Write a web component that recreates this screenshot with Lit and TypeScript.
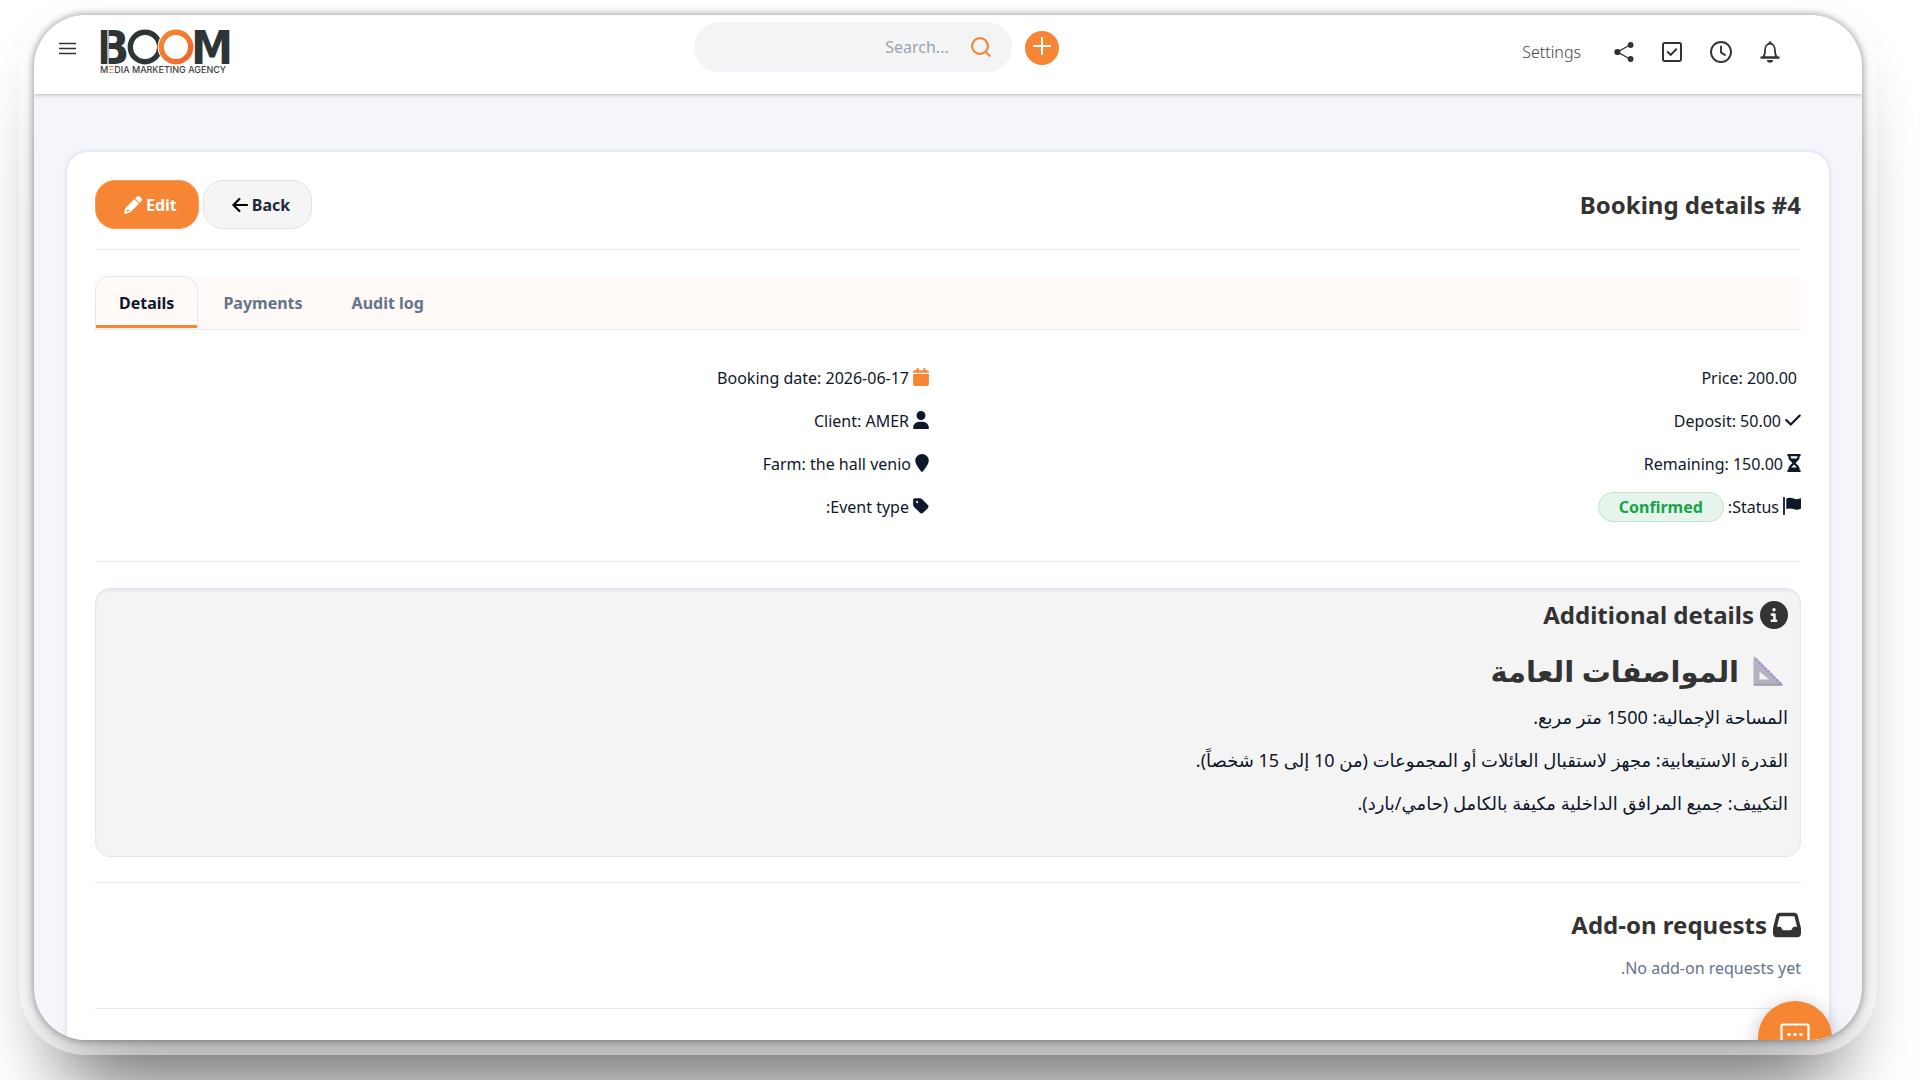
import { LitElement, html, css, svg, nothing } from "lit";
import { customElement, property, state } from "lit/decorators.js";

type Glyph = { box: string; body: unknown };

const solid = (box: string, d: string): Glyph => ({ box, body: svg`<path fill="currentColor" d=${d}></path>` });

const GLYPHS: Record<string, Glyph> = {
  menu: {
    box: "0 0 18 14",
    body: svg`<path d="M0 1.5h17M0 6.5h17M0 11.5h17" stroke="currentColor" stroke-width="1.4"></path>`,
  },
  search: {
    box: "0 0 20 20",
    body: svg`<g fill="none" stroke="currentColor" stroke-width="2.2"><circle cx="9" cy="9" r="7.900"></circle><path d="M14.6 14.6L19.2 19.4"></path></g>`,
  },
  plus: {
    box: "0 0 18 18",
    body: svg`<path d="M9 0v18M0 9h18" stroke="currentColor" stroke-width="2"></path>`,
  },
  share: {
    box: "0 0 20 20",
    body: svg`<g fill="currentColor"><circle cx="3.4" cy="10" r="3.1"></circle><circle cx="16.6" cy="3" r="2.9"></circle><circle cx="16.6" cy="17" r="2.9"></circle></g><path d="M16 3L3.4 10L16 17" fill="none" stroke="currentColor" stroke-width="1.4"></path>`,
  },
  task: {
    box: "0 0 20 20",
    body: svg`<g fill="none" stroke="currentColor"><rect x="1" y="1" width="18" height="18" rx="1.4" stroke-width="2"></rect><path d="M5.2 9.6l3.5 3.3 6-6.2" stroke-width="2"></path></g>`,
  },
  clock: {
    box: "0 0 22 22",
    body: svg`<g fill="none" stroke="currentColor" stroke-width="1.9"><circle cx="11" cy="11" r="10"></circle><path d="M11 4.8v6.6l4.6 3.1"></path></g>`,
  },
  bell: {
    box: "0 0 20 22",
    body: svg`<path d="M3 16.5c1.8-1.8 2-4 2-7C5 5.400 7.200 2.600 10 2.600s5 2.800 5 6.900c0 3 .2 5.200 2 7z" fill="none" stroke="currentColor" stroke-width="1.800"></path><path d="M0.400 16.500h19.200" stroke="currentColor" stroke-width="1.800"></path><circle cx="10" cy="1.700" r="1.500" fill="currentColor"></circle><path d="M7 19h6a3 2.800 0 0 1-6 0z" fill="currentColor"></path>`,
  },
  pencil: solid(
    "0 0 512 512",
    "M410.3 231l11.3-11.3-33.900-33.900-62.100-62.100L291.700 89.800l-11.300 11.300-22.600 22.600L58.600 322.900c-10.400 10.400-18 23.300-22.200 37.400L1 480.700c-2.500 8.400-.2 17.500 6.100 23.700s15.300 8.500 23.700 6.100l120.300-35.400c14.100-4.200 27-11.800 37.400-22.200L387.700 253.700 410.300 231zM160 399.400l-9.100 22.700c-4 3.100-8.500 5.400-13.300 6.900L79.400 446l15-58.100c1.400-4.900 3.800-9.400 6.900-13.300l10.700-9.100v18c0 8.800 7.200 16 16 16h32zM362.700 18.700L348.300 33.200 325.700 55.800 314.300 67.100l33.900 33.900 62.100 62.100 33.900 33.900 11.300-11.300 22.600-22.600 14.500-14.500c25-25 25-65.500 0-90.500L453.300 18.700c-25-25-65.500-25-90.500 0z",
  ),
  back: {
    box: "0 0 16 16",
    body: svg`<path d="M7.400 2L1.400 8l6 6M1.600 8H15" fill="none" stroke="#000" stroke-width="2.200" stroke-linecap="round" stroke-linejoin="round"></path>`,
  },
  calendar: solid(
    "0 0 448 512",
    "M96 32V64H48C21.500 64 0 85.500 0 112v24H448V112c0-26.500-21.500-48-48-48H352V32c0-17.700-14.300-32-32-32s-32 14.300-32 32V64H160V32c0-17.700-14.300-32-32-32S96 14.300 96 32zM448 172H0V464c0 26.500 21.500 48 48 48H400c26.500 0 48-21.500 48-48V172z",
  ),
  user: solid(
    "0 0 448 512",
    "M224 256A128 128 0 1 0 224 0a128 128 0 1 0 0 256zm-45.700 48C79.800 304 0 383.800 0 482.300C0 498.700 13.300 512 29.700 512H418.300c16.400 0 29.700-13.300 29.700-29.700C448 383.800 368.200 304 269.700 304H178.300z",
  ),
  pin: solid(
    "0 0 384 512",
    "M384 192c0 87.400-117 243-168.300 307.200c-12.300 15.300-35.100 15.300-47.400 0C117 435 0 279.400 0 192C0 86 86 0 192 0S384 86 384 192z",
  ),
  tag: solid(
    "0 0 448 512",
    "M0 80V229.500c0 17 6.700 33.300 18.700 45.300l176 176c25 25 65.500 25 90.500 0L418.700 317.300c25-25 25-65.500 0-90.500l-176-176c-12-12-28.300-18.700-45.300-18.700H48C21.500 32 0 53.500 0 80zm112 32a32 32 0 1 1 0 64 32 32 0 1 1 0-64z",
  ),
  check: solid(
    "0 0 448 512",
    "M438.600 105.400c12.500 12.500 12.500 32.800 0 45.300l-256 256c-12.500 12.500-32.800 12.500-45.300 0l-128-128c-12.500-12.500-12.500-32.800 0-45.300s32.800-12.500 45.300 0L160 338.700 393.400 105.400c12.500-12.500 32.800-12.500 45.300 0z",
  ),
  hourglass: solid(
    "0 0 384 512",
    "M32 0C14.300 0 0 14.300 0 32S14.300 64 32 64V75c0 42.400 16.900 83.100 46.900 113.100L146.700 256 78.900 323.900C48.900 353.900 32 394.600 32 437v11c-17.700 0-32 14.300-32 32s14.300 32 32 32H352c17.700 0 32-14.300 32-32s-14.300-32-32-32V437c0-42.400-16.900-83.100-46.900-113.100L237.300 256l67.900-67.900c30-30 46.900-70.700 46.900-113.100V64c17.700 0 32-14.300 32-32s-14.300-32-32-32H32zM96 75V64H288V75c0 19-5.600 37.400-16 53H112c-10.300-15.600-16-34-16-53zm16 309c3.500-5.300 7.600-10.300 12.100-14.900L192 301.300l67.900 67.900c4.600 4.600 8.600 9.600 12.100 14.900H112z",
  ),
  flag: {
    box: "0 0 18 18",
    body: svg`<path d="M1 .8v16.400" stroke="currentColor" stroke-width="1.800" stroke-linecap="round"></path><path d="M3.300 1.400c2.600-1 5-.9 7.200.1 2.200 1 4.500.9 6.600-.2.5-.2.900 0 .9.500v9.800c-2.600 1.500-5.200 1.500-7.600.5-2.300-.9-4.600-.9-7.100-.1z" fill="currentColor"></path>`,
  },
  info: solid(
    "0 0 512 512",
    "M256 512A256 256 0 1 0 256 0a256 256 0 1 0 0 512zM216 336h24V272H216c-13.300 0-24-10.700-24-24s10.700-24 24-24h48c13.300 0 24 10.700 24 24v88h8c13.300 0 24 10.700 24 24s-10.700 24-24 24H216c-13.300 0-24-10.700-24-24s10.700-24 24-24zm40-208a32 32 0 1 1 0 64 32 32 0 1 1 0-64z",
  ),
  inbox: solid(
    "0 0 512 512",
    "M121 32C91.600 32 66 52 58.900 80.500L1.900 308.400C.6 313.500 0 318.700 0 323.900V416c0 35.300 28.700 64 64 64H448c35.300 0 64-28.700 64-64V323.900c0-5.200-.6-10.400-1.900-15.500l-57-227.900C446 52 420.400 32 391 32H121zm0 64H391l48 192H387.800c-12.100 0-23.200 6.800-28.600 17.700l-14.300 28.600c-5.400 10.800-16.500 17.700-28.600 17.700H195.800c-12.100 0-23.200-6.800-28.600-17.700l-14.300-28.600c-5.400-10.800-16.500-17.700-28.600-17.700H73L121 96z",
  ),
  ruler: {
    box: "0 0 30 30",
    body: svg`<path d="M0.500 2c0-1.500 1-2 2-1L29 27.500c1.200 1.300.6 2.500-1 2.500H2.500c-1.200 0-2-.8-2-2zM6.500 15.500v8h9.500z" fill="#b7b2c2" fill-rule="evenodd"></path><path d="M0.500 28.500h29" stroke="#a19bae" stroke-width="1.500"></path><path d="M3 3.400L27.500 27.400" stroke="#a277ee" stroke-width="2" stroke-dasharray="1.600 2.500"></path>`,
  },
  chat: {
    box: "0 0 30 30",
    body: svg`<path d="M3 1.500h24a1.500 1.500 0 0 1 1.500 1.500v19a1.500 1.500 0 0 1-1.500 1.500H9l-7.500 5V3A1.500 1.500 0 0 1 3 1.500z" fill="none" stroke="currentColor" stroke-width="2.200"></path><path d="M7.500 10h3v3h-3zM13.500 10h3v3h-3zM19.500 10h3v3h-3z" fill="currentColor"></path>`,
  },
};

@customElement("ui-icon")
export class UiIcon extends LitElement {
  @property() name = "";

  static styles = css`
    :host { display: inline-flex; flex: none; }
    svg { display: block; width: 100%; height: 100%; }
  `;

  render() {
    const g = GLYPHS[this.name];
    return g ? html`<svg viewBox=${g.box} aria-hidden="true">${g.body}</svg>` : nothing;
  }
}

@customElement("brand-logo")
export class BrandLogo extends LitElement {
  static styles = css`
    :host { display: block; width: 128px; height: 44px; }
    svg { display: block; overflow: visible; }
    .letter { font: 700 47px "Liberation Sans Narrow", "DejaVu Sans Condensed", sans-serif; fill: #2e3536; }
    .tagline { font: 500 9px Inter, sans-serif; fill: #3a4041; }
    .accent { fill: #f47a30; }
  `;

  render() {
    return html`<svg width="128" height="44" viewBox="0 0 128 44" role="img" aria-label="BOOM Media Marketing Agency">
      <defs>
        <linearGradient id="ring" x1="0" y1="0" x2="1" y2="1">
          <stop offset="0" stop-color="#f98a35"></stop>
          <stop offset="1" stop-color="#f1622a"></stop>
        </linearGradient>
      </defs>
      <text class="letter" x="-4" y="34">B</text>
      <circle cx="44" cy="17" r="14.700" fill="none" stroke="#2e3536" stroke-width="5.400"></circle>
      <circle cx="75" cy="17" r="18.400" fill="#fff"></circle>
      <circle cx="75" cy="17" r="14.700" fill="none" stroke="url(#ring)" stroke-width="5.400"></circle>
      <text class="letter" x="90" y="34">M</text>
      <path d="M7 0v34" stroke="#fff" stroke-width="1.200"></path>
      <text class="tagline" x="-1" y="43">M<tspan class="accent">Ξ</tspan>DIA MARKETING AGENCY</text>
    </svg>`;
  }
}

type Fact = { icon?: string; text: string; badge?: string; accent?: boolean };

const MAIN_FACTS: Fact[] = [
  { text: "Price: 200.00" },
  { icon: "check", text: "Deposit: 50.00" },
  { icon: "hourglass", text: "Remaining: 150.00" },
  { icon: "flag", text: "Status:", badge: "Confirmed" },
];

const BOOKING_FACTS: Fact[] = [
  { icon: "calendar", text: "Booking date: 2026-06-17", accent: true },
  { icon: "user", text: "Client: AMER" },
  { icon: "pin", text: "Farm: the hall venio" },
  { icon: "tag", text: "Event type:" },
];

const SPECS = [
  "المساحة الإجمالية: 1500 متر مربع.",
  "القدرة الاستيعابية: مجهز لاستقبال العائلات أو المجموعات (من 10 إلى 15 شخصاً).",
  "التكييف: جميع المرافق الداخلية مكيفة بالكامل (حامي/بارد).",
];

const TABS = ["Details", "Payments", "Audit log"];

@customElement("app-root")
export class AppRoot extends LitElement {
  @state() private tab = "Details";

  static styles = css`
    :host {
      display: block;
      box-sizing: border-box;
      height: 100vh;
      padding: 15px 58px 40px 34px;
      overflow: hidden;
      background: #fff;
      color: #0f172a;
      font: 400 16px/24px "Noto Sans", "DejaVu Sans", sans-serif;
    }
    *, *::before, *::after { box-sizing: border-box; }
    h1, h2, h3, p, ul { margin: 0; padding: 0; }
    ul { list-style: none; }
    button, input { font: inherit; }
    button { cursor: pointer; }

    .window {
      height: 100%;
      border-radius: 52px;
      background: #f4f6fb;
      box-shadow:
        0 0 8px rgba(0, 0, 0, 0.45),
        0 0 0 15px rgba(255, 255, 255, 0.45),
        0 30px 60px rgba(0, 0, 0, 0.12),
        0 80px 80px -35px rgba(0, 0, 0, 0.5);
    }
    .view {
      position: relative;
      display: flex;
      flex-direction: column;
      height: 100%;
      overflow: hidden;
      border-radius: inherit;
    }

    .topbar {
      display: grid;
      grid-template-columns: 22fr auto 25fr;
      flex: none;
      height: 79px;
      padding: 0 82px 0 25px;
      background: #fff;
      box-shadow: 0 1px 4px rgba(0, 0, 0, 0.25);
    }
    .start { display: flex; align-items: flex-start; gap: 24px; padding-top: 15px; }
    .plain { display: flex; padding: 0; border: 0; background: none; color: #333; }
    .menu { margin-top: 12px; }
    .menu ui-icon { width: 18px; height: 14px; }
    .middle { display: flex; align-items: flex-start; gap: 13px; padding-top: 7px; }
    .search {
      display: flex;
      align-items: center;
      gap: 22px;
      width: 318px;
      height: 50px;
      padding: 0 21px 0 24px;
      border-radius: 25px;
      background: #f2f4f6;
      color: #f68634;
    }
    .search input {
      flex: 1;
      min-width: 0;
      padding: 0;
      border: 0;
      outline: 0;
      background: none;
      color: #333;
      text-align: right;
    }
    .search input::placeholder { color: #9ca3af; opacity: 1; }
    .search ui-icon { width: 20px; height: 20px; }
    .add {
      display: flex;
      justify-content: center;
      width: 34px;
      height: 34px;
      margin-top: 9px;
      padding: 6px 0 0;
      border: 0;
      border-radius: 50%;
      background: #f68634;
      color: #fff;
    }
    .add ui-icon { width: 18px; height: 18px; }
    .end { display: flex; align-items: center; justify-content: flex-end; padding-bottom: 6px; gap: 28px; }
    .end a { margin-right: 5px; color: #444; font-weight: 300; text-decoration: none; }
    .end ui-icon { width: 20px; height: 22px; }
    .end ui-icon[name="clock"] { width: 22px; }

    .card {
      display: flex;
      flex: none;
      flex-direction: column;
      margin: 57px 32px 0;
      padding: 28px 28px 80px;
      border: 1px solid #e6e9f5;
      border-radius: 22px;
      background: #fff;
      box-shadow: 0 0 4px rgba(200, 208, 235, 0.6);
    }
    .head {
      display: flex;
      align-items: center;
      justify-content: space-between;
      padding-bottom: 20px;
      border-bottom: 1px solid #e6e9f2;
    }
    h1, h2, h3 { color: #333; font-weight: 700; line-height: 36px; }
    h1, h2 { font-size: 24px; }
    h3 { font-size: 29px; }
    .actions { display: flex; gap: 4px; }
    .btn {
      display: flex;
      align-items: center;
      gap: 4px;
      height: 49px;
      padding: 0 21px 0 28px;
      border: 1px solid #e2e2e2;
      border-radius: 20px;
      background: #f5f5f5;
      color: #1e293b;
      font-weight: 700;
    }
    .btn.primary { border-color: #f89a54; background: #f68634; color: #fff; }
    .btn ui-icon { width: 18px; height: 18px; }
    .btn ui-icon[name="back"] { width: 16px; }

    .tabs {
      display: flex;
      gap: 1px;
      margin-top: 26px;
      border-bottom: 1px solid #e6e9f2;
      background: #fff9f7;
    }
    .tab {
      position: relative;
      height: 53px;
      padding: 0 23px;
      border: 1px solid transparent;
      border-bottom: 0;
      border-radius: 15px 15px 0 0;
      background: none;
      color: #64748b;
      font-weight: 700;
    }
    .tab.on { border-color: #e2e8f5; color: #0f172a; }
    .tab.on::after {
      content: "";
      position: absolute;
      right: 0;
      bottom: 1px;
      left: 0;
      height: 3px;
      background: #f68634;
    }

    .facts {
      display: grid;
      grid-template-columns: 1fr 1fr;
      gap: 38px;
      padding: 26px 0 33px;
      border-bottom: 1px solid #e6e9f2;
    }
    .fact { display: flex; align-items: center; gap: 4px; height: 43px; }
    .fact ui-icon { height: 18px; width: 16px; margin-bottom: 2px; }
    .fact ui-icon[name="pin"], .fact ui-icon[name="hourglass"] { width: 14px; }
    .fact ui-icon[name="flag"] { width: 18px; }
    .fact.bare { padding-right: 4px; }
    .accent { color: #f68634; }
    .badge {
      padding: 2px 20px;
      border: 1px solid #bce5c9;
      border-radius: 15px;
      background: #e6f5eb;
      color: #16a34a;
      font-weight: 700;
    }

    .extra {
      margin-top: 26px;
      min-height: 269px;
      padding: 8px 12px;
      border: 1px solid #e2e7f4;
      border-radius: 15px;
      background: #f4f4f4;
      box-shadow: inset 0 2px 2px rgba(200, 205, 220, 0.3);
    }
    .title { display: flex; align-items: center; gap: 6px; }
    .title ui-icon { width: 28px; height: 28px; }
    .spec-title { display: flex; align-items: center; gap: 14px; margin: 20px 5px 16px; }
    .spec-title ui-icon { width: 30px; height: 30px; }
    .extra p { font-size: 18px; line-height: 24px; margin-bottom: 19px; }
    .rule { height: 1px; margin: 0; border: 0; background: #e6e9ee; }
    .addons { padding: 24px 0 28px; }
    .addons p { margin-top: 13px; color: #64748b; }
    .after { margin-top: 25px; }

    .chat {
      position: absolute;
      right: 30px;
      bottom: -35px;
      display: flex;
      justify-content: center;
      width: 74px;
      height: 74px;
      padding: 22px 0 0;
      border: 0;
      border-radius: 50%;
      background: #f68634;
      color: #fff;
      box-shadow: 0 4px 20px rgba(0, 0, 0, 0.25);
    }
    .chat ui-icon { width: 30px; height: 30px; }
  `;

  private facts(items: Fact[]) {
    return html`<ul>
      ${items.map(
        (f) => html`<li class="fact ${f.icon ? "" : "bare"}">
          ${f.icon ? html`<ui-icon class=${f.accent ? "accent" : ""} name=${f.icon}></ui-icon>` : nothing}
          <span>${f.text}</span>
          ${f.badge ? html`<span class="badge">${f.badge}</span>` : nothing}
        </li>`,
      )}
    </ul>`;
  }

  render() {
    return html`
      <div class="window">
        <div class="view">
          <header class="topbar">
            <div class="start">
              <button class="plain menu" aria-label="Menu"><ui-icon name="menu"></ui-icon></button>
              <brand-logo></brand-logo>
            </div>
            <div class="middle">
              <label class="search">
                <input type="text" placeholder="Search..." aria-label="Search" />
                <ui-icon name="search"></ui-icon>
              </label>
              <button class="add" aria-label="Add"><ui-icon name="plus"></ui-icon></button>
            </div>
            <nav class="end">
              <a href="#settings">Settings</a>
              ${["share", "task", "clock", "bell"].map(
                (n) => html`<button class="plain" aria-label=${n}><ui-icon name=${n}></ui-icon></button>`,
              )}
            </nav>
          </header>

          <main class="card">
            <div class="head" dir="rtl">
              <h1>Booking details #4</h1>
              <div class="actions" dir="ltr">
                <button class="btn primary"><ui-icon name="pencil"></ui-icon>Edit</button>
                <button class="btn"><ui-icon name="back"></ui-icon>Back</button>
              </div>
            </div>

            <div class="tabs" role="tablist">
              ${TABS.map(
                (t) => html`<button
                  class="tab ${t === this.tab ? "on" : ""}"
                  role="tab"
                  aria-selected=${t === this.tab}
                  @click=${() => (this.tab = t)}
                >${t}</button>`,
              )}
            </div>

            <div class="facts" dir="rtl">${this.facts(MAIN_FACTS)} ${this.facts(BOOKING_FACTS)}</div>

            <section class="extra" dir="rtl">
              <h2 class="title"><ui-icon name="info"></ui-icon>Additional details</h2>
              <h3 class="spec-title"><ui-icon name="ruler"></ui-icon>المواصفات العامة</h3>
              ${SPECS.map((s) => html`<p>${s}</p>`)}
            </section>

            <hr class="rule after" />
            <section class="addons" dir="rtl">
              <h2 class="title"><ui-icon name="inbox"></ui-icon>Add-on requests</h2>
              <p>No add-on requests yet.</p>
            </section>
            <hr class="rule" />
          </main>

          <button class="chat" aria-label="Chat"><ui-icon name="chat"></ui-icon></button>
        </div>
      </div>
    `;
  }
}
